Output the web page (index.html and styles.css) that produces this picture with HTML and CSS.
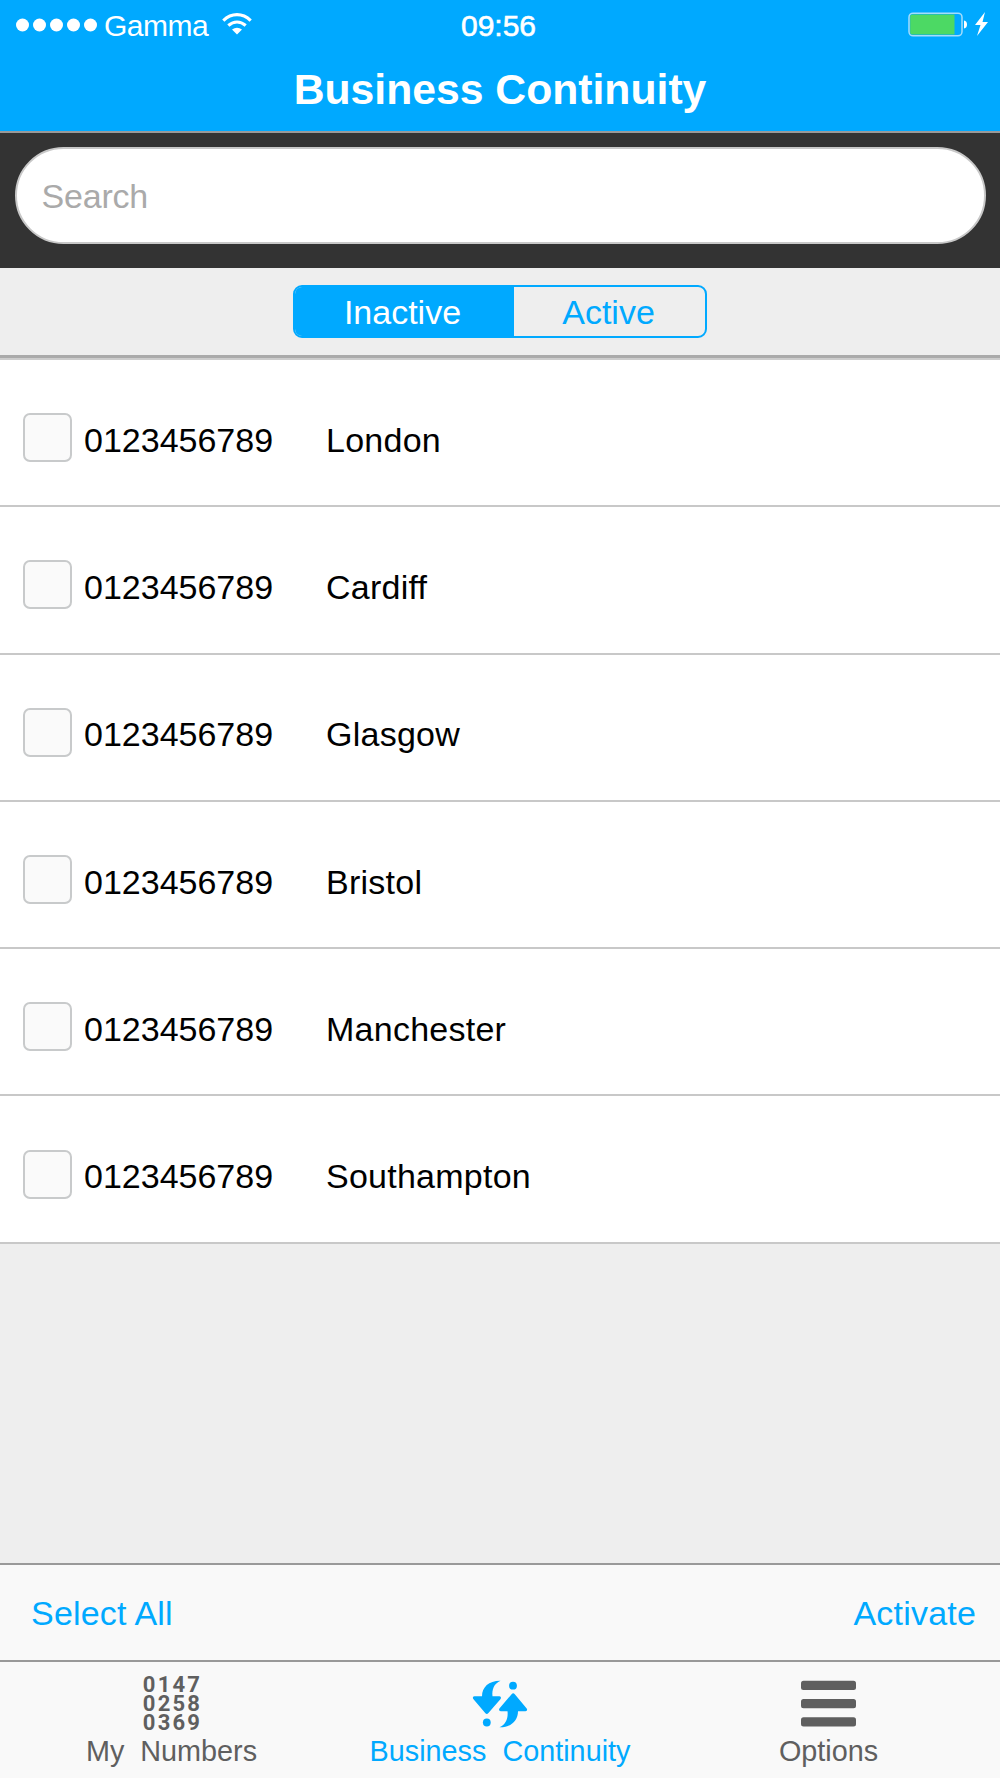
FILE: index.html
```html
<!DOCTYPE html>
<html lang="en">
<head>
<meta charset="utf-8">
<title>Business Continuity</title>
<link rel="stylesheet" href="styles.css">
</head>
<body>
<div class="app">
  <header class="header">
    <div class="status">
      <div class="carrier">
        <svg class="signal" width="82" height="14" viewBox="0 0 82 14" fill="#fff"><circle cx="6.5" cy="7" r="6.5"/><circle cx="23.5" cy="7" r="6.5"/><circle cx="40.5" cy="7" r="6.5"/><circle cx="57.5" cy="7" r="6.5"/><circle cx="74.5" cy="7" r="6.5"/></svg>
        <span class="carrier-name">Gamma</span>
        <svg class="wifi" width="30" height="22" viewBox="0 0 30 22"><g fill="none" stroke="#fff" stroke-width="3.2"><path d="M1.3 7.6Q7.5 1.7 15 1.7T28.7 7.6"/><path d="M6.3 12.5Q10.5 9 15 9T23.7 12.5"/></g><path d="M10 16.6Q15 12.9 20 16.6L15 21.5Z" fill="#fff"/></svg>
      </div>
      <span class="time">09:56</span>
      <svg class="battery" width="82" height="26" viewBox="0 0 82 26"><rect x="1" y="1.2" width="53" height="22.6" rx="4" fill="none" stroke="#a5ddfb" stroke-width="1.5"/><path d="M4 2.4H46.5V22.4H4Q2.2 22.4 2.2 20.5V4.5Q2.2 2.4 4 2.4Z" fill="#4cd964"/><path d="M56 8.5Q59 9 59 12.5T56 16.5Z" fill="#fff"/><path d="M77 0L67 13H72.5L69 24L80 10H74.5Z" fill="#fff"/></svg>
    </div>
    <h1 class="title">Business Continuity</h1>
  </header>
  <div class="search-bar"><input class="search" type="text" placeholder="Search"></div>
  <div class="filter">
    <div class="segments">
      <span class="segment segment-on">Inactive</span>
      <span class="segment">Active</span>
    </div>
  </div>
  <main class="list">
    <div class="row"><span class="check"></span><span class="number">0123456789</span><span class="place">London</span></div>
    <div class="row"><span class="check"></span><span class="number">0123456789</span><span class="place">Cardiff</span></div>
    <div class="row"><span class="check"></span><span class="number">0123456789</span><span class="place">Glasgow</span></div>
    <div class="row"><span class="check"></span><span class="number">0123456789</span><span class="place">Bristol</span></div>
    <div class="row"><span class="check"></span><span class="number">0123456789</span><span class="place">Manchester</span></div>
    <div class="row"><span class="check"></span><span class="number">0123456789</span><span class="place">Southampton</span></div>
  </main>
  <div class="actions"><span>Select All</span><span>Activate</span></div>
  <nav class="tabs">
    <div class="tab">
      <div class="tab-icon digits"><span>0147</span><span>0258</span><span>0369</span></div>
      <span class="label">My&nbsp; Numbers</span>
    </div>
    <div class="tab tab-on">
      <svg class="tab-icon" width="56" height="50" viewBox="0 0 56 50" fill="#00a9ff"><path d="M28.5 1.7C17 1.5 10 8 10 17.3H2.5Q0 17.8 1.3 20L13.2 34Q14.8 35.8 16.4 34L28.6 20Q29.8 17.8 27.2 17.3H20.5C19.7 10.5 22 4.5 28.5 1.7Z"/><circle cx="14.8" cy="43.5" r="3.9"/><path d="M27.5 48.3C39 48.5 46 41.5 46 32.2H53.5Q56 31.7 54.7 29.5L42.8 15.2Q41.2 13.4 39.6 15.2L27.4 29.5Q26.2 31.7 28.8 32.2H35.5C36.3 39 34 45.5 27.5 48.3Z"/><circle cx="41" cy="6.7" r="3.9"/></svg>
      <span class="label">Business&nbsp; Continuity</span>
    </div>
    <div class="tab">
      <svg class="tab-icon" width="55" height="50" viewBox="0 0 55 50" fill="#5f5f5f"><rect y="1.8" width="55" height="9.2" rx="2.5"/><rect y="20" width="55" height="9.2" rx="2.5"/><rect y="38.3" width="55" height="9.2" rx="2.5"/></svg>
      <span class="label">Options</span>
    </div>
  </nav>
</div>
</body>
</html>
```
FILE: styles.css
```css
* { box-sizing: border-box; }
body { margin: 0; font-family: "Liberation Sans", Arial, sans-serif; font-size: 34px; color: #000; }
.app { width: 1000px; height: 1778px; display: flex; flex-direction: column; background: #eee; }
.header { height: 133px; background: #00a9ff; border-bottom: 2px solid #999; color: #fff; }
.status { height: 50px; display: grid; grid-template-columns: 1fr auto 1fr; align-items: center; font-size: 30px; }
.carrier { display: flex; align-items: center; padding-left: 16px; }
.carrier-name { margin: 2px 0 0 6px; letter-spacing: -0.5px; }
.wifi { margin: -2px 0 0 14px; }
.time { padding: 1px 3px 0 0; -webkit-text-stroke: 0.6px #fff; }
.battery { justify-self: end; margin-right: 10px; }
.title { margin: 0; padding-top: 15px; line-height: 48px; font-size: 42.7px; font-weight: bold; text-align: center; }
.search-bar { height: 135px; padding: 14px 14.5px 0; background: #333; }
.search { display: block; width: 100%; height: 97px; padding: 2px 0 0 25px; border: 2px solid #c8c8c8; border-radius: 49px; background: #fff; font: inherit; letter-spacing: -0.2px; outline: 0; }
.search::placeholder { color: #aaa; opacity: 1; }
.filter { height: 92px; padding-top: 17px; border-bottom: 2px solid #ccc; box-shadow: inset 0 -3px #aaa; background: #eee; }
.segments { display: flex; width: 414px; height: 53px; margin: 0 auto; border: 2px solid #00a9ff; border-radius: 9px; overflow: hidden; line-height: 51px; text-align: center; color: #00a9ff; }
.segment { flex: 1; padding-right: 2px; }
.segment-on { flex: 0 0 219px; background: #00a9ff; color: #fff; padding-right: 4px; }
.row { display: flex; align-items: center; height: 147.3px; padding: 10px 0 0 23px; background: #fff; border-bottom: 2px solid #c8c8c8; }
.check { width: 49px; height: 49px; border: 2px solid #c8cacb; border-radius: 7px; background: #fafafa; }
.number { width: 241px; margin-left: 12px; padding-top: 5px; }
.place { padding: 5px 0 0 1px; letter-spacing: 0.25px; }
.actions { display: flex; justify-content: space-between; margin-top: auto; height: 97px; padding: 0 24px 0 31px; border-top: 2px solid #999; background: #f9f9f9; line-height: 97px; letter-spacing: 0.2px; color: #00a9ff; }
.tabs { display: grid; grid-template-columns: 343px 314px 343px; height: 118px; border-top: 2px solid #999; background: #f9f9f9; }
.tab { display: flex; flex-direction: column; align-items: center; color: #5f5f5f; }
.tab-on { color: #00a9ff; }
.tab-icon { margin-top: 17px; height: 50px; flex: none; }
.digits { display: flex; flex-direction: column; margin: 13px -2px 4px 0; font: bold 22px/19px Roboto, sans-serif; letter-spacing: 2.2px; }
.label { margin-top: 4px; font-size: 28.8px; line-height: 36px; }
```
